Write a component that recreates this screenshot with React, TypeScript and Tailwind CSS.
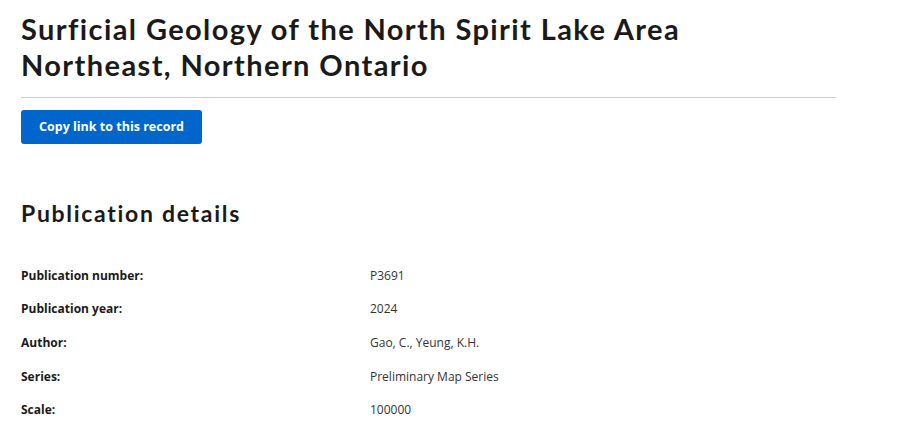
const rows: [string, string][] = [
  ["Publication number:", "P3691"],
  ["Publication year:", "2024"],
  ["Author:", "Gao, C., Yeung, K.H."],
  ["Series:", "Preliminary Map Series"],
  ["Scale:", "100000"],
];

export default function App() {
  return (
    <div className="min-h-screen bg-white text-[#1a1a1a] font-['Open_Sans',sans-serif]">
      <div className="ml-[21px] w-[815px] pt-[11px]">
        <h1 className="font-['Lato',sans-serif] text-[29px] font-bold leading-[36px] tracking-[1.4px] text-[#1a1a1a]">
          Surficial Geology of the North Spirit Lake Area
          <br />
          Northeast, Northern Ontario
        </h1>
        <hr className="mt-[14px] border-t border-[#cccccc]" />
        <button className="mt-[12px] h-[34px] w-[181px] rounded-[3px] bg-[#0066cc] text-[12.5px] font-bold text-white">
          Copy link to this record
        </button>
        <h2 className="mt-[54px] font-['Lato',sans-serif] text-[23px] font-bold leading-[30px] tracking-[1.7px] text-[#1a1a1a]">
          Publication details
        </h2>
        <div className="mt-[31px] flex flex-col">
          {rows.map(([k, v]) => (
            <div key={k} className="flex h-[33.6px] items-center text-[12px] leading-[16px]">
              <div className="w-[349px] font-bold">{k}</div>
              <div className="text-[#333]">{v}</div>
            </div>
          ))}
        </div>
      </div>
    </div>
  );
}
